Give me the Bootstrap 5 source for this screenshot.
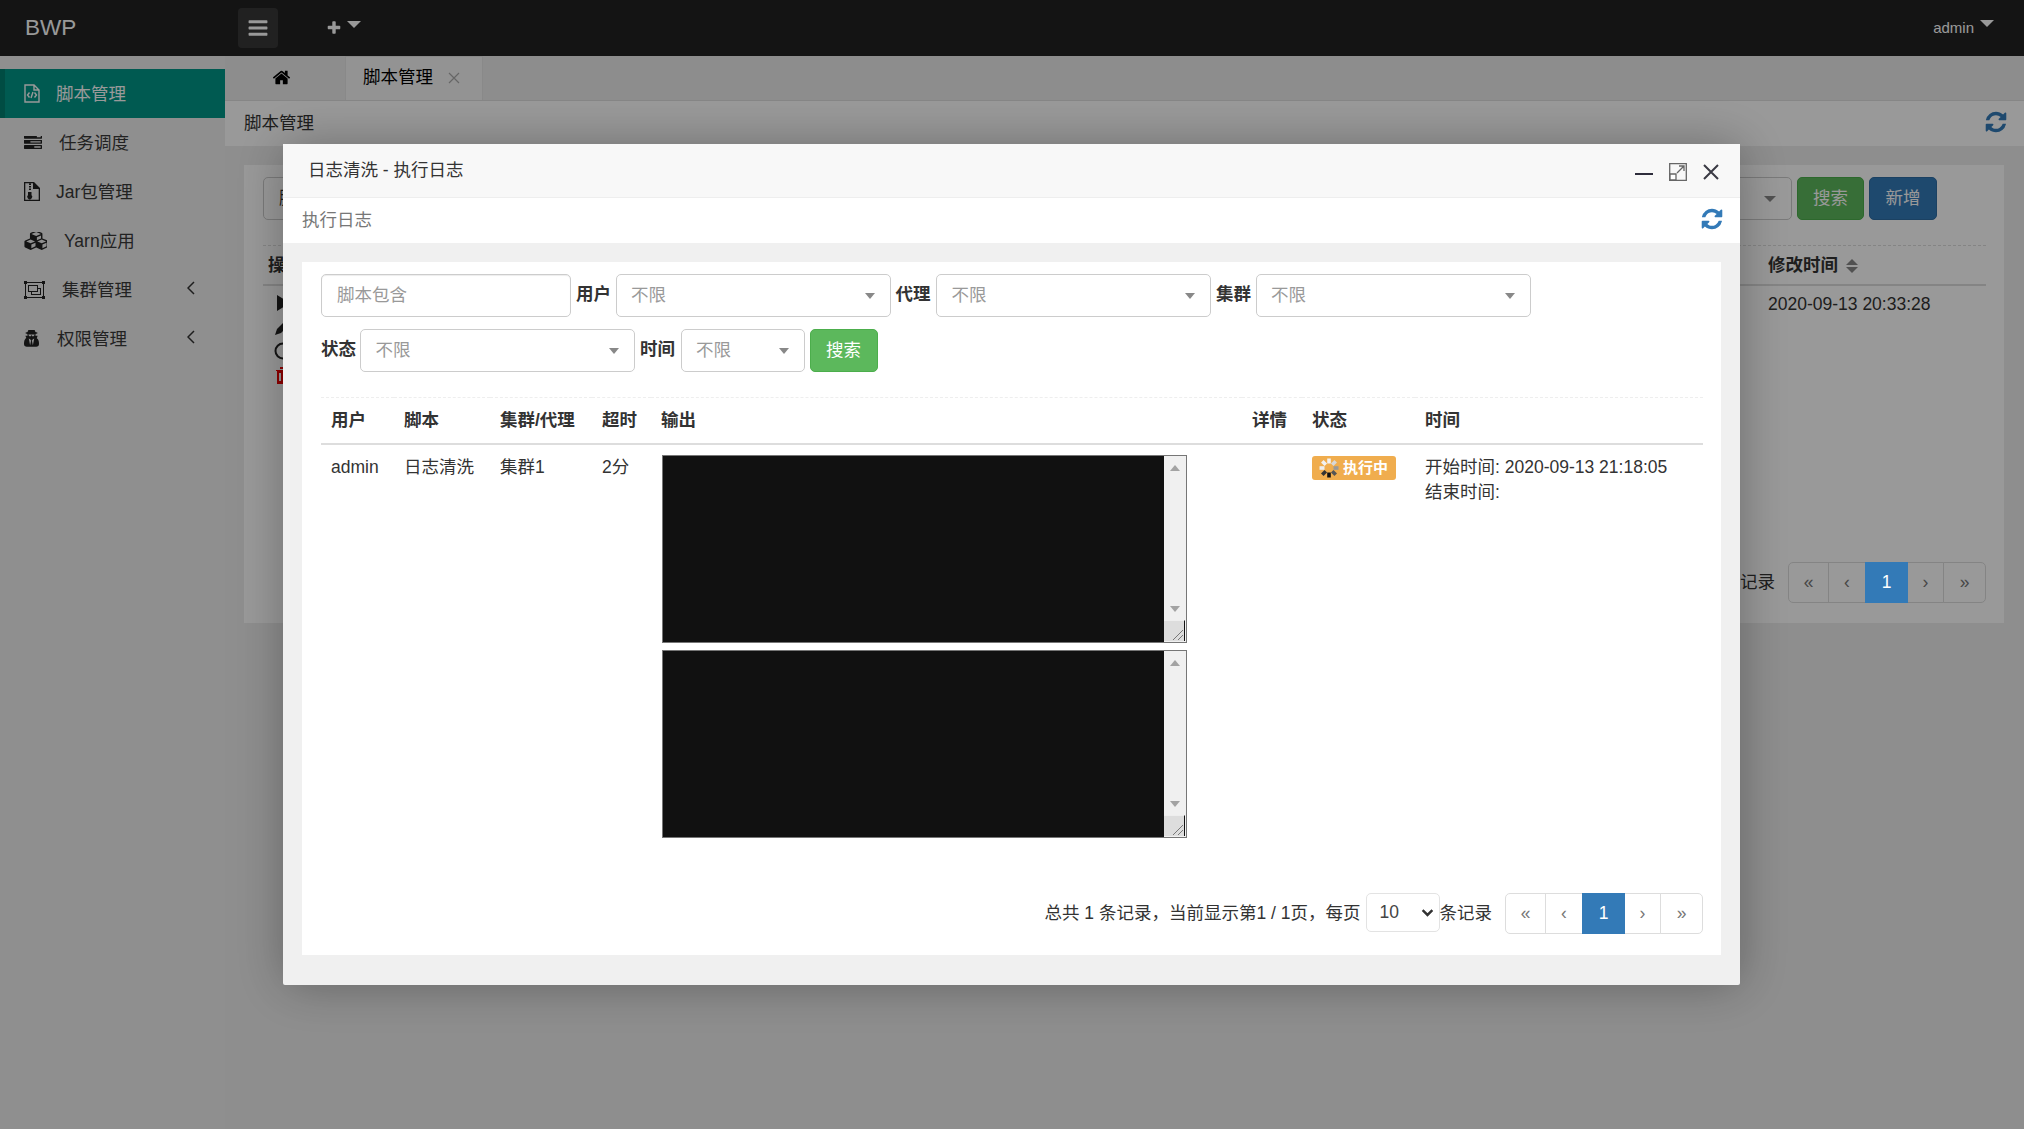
<!DOCTYPE html>
<html lang="zh-CN">
<head>
<meta charset="utf-8">
<title>BWP</title>
<link href="https://cdn.jsdelivr.net/npm/bootstrap@5.3.0/dist/css/bootstrap.min.css" rel="stylesheet">
<style>
html,body{height:100%;}
body{font-family:"Liberation Sans","Noto Sans CJK SC",sans-serif;font-size:17.5px;line-height:25px;color:#333;background:#efefef;overflow:hidden;}
.top-bar{height:56px;background:#222;color:#fff;}
.brand-txt{font-size:22.5px;margin-left:25px;width:213px;line-height:54px;}
.menu-toggle{width:40px;height:40px;background:#383838;border-radius:4px;}
.menu-toggle svg{width:22px;height:22px;fill:#fff;}
.plus-wrap{margin-left:48px;}
.plus-wrap svg{width:16px;height:16px;fill:#fff;}
.caret-down{display:inline-block;border-left:7.5px solid transparent;border-right:7.5px solid transparent;border-top:7px solid #fff;}
.plus-wrap .caret-down{margin-left:5px;margin-bottom:8px;}
.admin-wrap{font-size:15px;margin-right:30px;gap:6px;margin-bottom:2px;}
.admin-wrap .caret-down{margin-bottom:8px;}
.side-col{width:225px;padding-top:13px;background:#eee;flex:none;}
.side-item{height:49px;padding-left:24px;position:relative;color:#3a3a3a;}
.side-item span{padding-top:1px;}
.side-item svg{fill:#222;flex:none;}
.side-item.on{background:#009688;color:#fff;border-left:5px solid #007f70;padding-left:19px;}
.side-item.on svg{fill:none;stroke:#fff;}
.gap-a{margin-left:16px;}
.gap-b{margin-left:17px;}
.gap-c{margin-left:18px;}
.chev{position:absolute;left:187px;top:16px;width:8px;height:14px;}
.main-col{flex:1;min-width:0;background:#ededed;}
.tab-strip{height:45px;border-bottom:1px solid #e0e0e0;background:#ececec;}
.tab-home{width:120px;padding-right:8px;padding-bottom:2px;}
.tab-home svg{width:19px;height:19px;fill:#000;}
.tab-page{width:138px;background:#f6f6f6;border:1px solid #e4e4e4;border-bottom:0;padding-left:17px;padding-bottom:2px;color:#000;gap:15px;}
.crumb-bar{height:45px;background:#fff;padding-left:19px;color:#333;padding-right:16px;}
.crumb-bar svg{width:24px;height:24px;fill:#337ab7;margin-bottom:3px;}
.bg-card{margin:19px 20px 0 19px;height:458px;background:#fff;padding:12px 18px 20px 19px;}
.bg-input{width:260px;height:43px;border:1px solid #ccc;border-radius:5px;padding:8px 15px;}
.bg-select{width:240px;height:43px;border:1px solid #ccc;border-radius:5px;padding-right:15px;}
.caret-grey{display:inline-block;border-left:6px solid transparent;border-right:6px solid transparent;border-top:6px solid #888;}
.btn-green{background:#5cb85c;color:#fff;border:1px solid #4cae4c;border-radius:5px;}
.btn-blue{background:#337ab7;color:#fff;border:1px solid #2e6da4;border-radius:5px;}
.bg-btn{width:67px;height:43px;padding:0;font-size:17.5px;line-height:41px;}
.bg-btn.btn-blue{width:68px;}
.bg-btns{gap:5px;margin-right:49px;margin-left:5px;}
.bg-head{margin-top:25px;border-top:1px dashed #ddd;border-bottom:2px solid #ddd;height:41px;font-weight:700;line-height:38px;padding:0 0 0 5px;}
.bg-sort{display:inline-flex;flex-direction:column;gap:2px;margin-left:8px;vertical-align:6px;}
.sort-u{border-left:6px solid transparent;border-right:6px solid transparent;border-bottom:6px solid #888;}
.sort-d{border-left:6px solid transparent;border-right:6px solid transparent;border-top:6px solid #888;}
.time-cell{width:218px;}
.bg-date{padding-top:6px;}
.bg-ops{padding:8px 0 0 11px;gap:6px;}
.bg-ops svg{display:block;width:18px;height:18px;}
.bg-rec{margin-right:13px;}
.pager-list{--bs-pagination-font-size:17.5px;--bs-pagination-color:#777;--bs-pagination-border-color:#ddd;--bs-pagination-active-bg:#337ab7;--bs-pagination-active-border-color:#337ab7;--bs-pagination-border-radius:5px;margin:0;}
.pager-list .page-link{height:41px;line-height:39px;padding:0;text-align:center;}
.pg-a{width:41px;}.pg-b{width:38px;}.pg-c{width:43px;}.pg-d{width:37px;}.pg-e{width:43px;}
.dim-layer{position:fixed;inset:0;background:rgba(0,0,0,.4);}
.log-window{position:fixed;left:283px;top:144px;width:1457px;height:841px;background:#f0f0f0;box-shadow:1px 1px 50px rgba(0,0,0,.3);border-radius:2px;}
.log-title{height:54px;background:#f8f8f8;border-bottom:1px solid #eee;padding-left:25px;padding-right:21px;color:#333;}
.win-ctrl{gap:16px;padding-top:2px;}
.log-sub{height:45px;background:#fff;padding:0 19px;color:#777;}
.log-sub svg{width:24px;height:24px;fill:#337ab7;margin-right:-3px;margin-bottom:3px;}
.log-panel{margin:19px 19px 29px;background:#fff;height:693px;padding:12px 18px 21px 19px;}
.flt-row{gap:5px;margin-bottom:12px;}
.flt-input{width:250px;height:43px;font-size:17.5px;border:1px solid #ccc;border-radius:5px;padding:8px 15px;color:#555;box-shadow:inset 0 1px 1px rgba(0,0,0,.075);}
.flt-input::placeholder{color:#999;}
.flt-label{font-weight:700;width:34.5px;white-space:nowrap;line-height:41px;align-self:flex-start;}
.flt-select{height:43px;font-size:17.5px;line-height:25px;border:1px solid #ccc;border-radius:5px;padding:8px 34px 8px 14.5px;color:#999;
background-image:url("data:image/svg+xml,%3Csvg xmlns='http://www.w3.org/2000/svg' viewBox='0 0 12 7'%3E%3Cpath d='M0 0h12L6 7z' fill='%23888'/%3E%3C/svg%3E");background-size:10px 6px;background-position:right 15px center;}
.w-wide{width:275px;}
.w-short{width:124px;}
.lbl-sm{width:34px;}
.lbl-lg{width:35.5px;}
.flt-btn{width:68px;height:43px;padding:0;font-size:17.5px;line-height:41px;}
.log-table{width:1382px;table-layout:fixed;margin:25px 0 0;border-top:1px dashed #eee;--bs-table-color:#333;}
.log-table th,.log-table td{padding:10px;line-height:25px;border:0;}
.log-table thead th{border-bottom:2px solid #ddd;font-weight:700;}
.c1{width:73px}.c2{width:96px}.c3{width:102px}.c4{width:59px}.c5{width:591px}.c6{width:60px}.c7{width:113px}.c8{width:288px}
.out-box{width:525px;height:188px;border:1px solid #767676;background:#111;margin-bottom:7px;margin-left:1px;}
.out-box:last-child{margin-bottom:0;}
.out-fill{flex:1;}
.out-bar{width:22px;background:#f0f0f0;padding-top:9px;}
.tri-u{border-left:5px solid transparent;border-right:5px solid transparent;border-bottom:6px solid #a3a3a3;}
.tri-d{border-left:5px solid transparent;border-right:5px solid transparent;border-top:6px solid #a3a3a3;margin-top:auto;margin-bottom:8px;}
.grip{width:21px;height:21px;background:#ddd;display:block;margin-left:-1px;margin-bottom:1px;border-right:1px solid #111;border-top:1px solid #eee;}
.run-tag{display:inline-flex;align-items:center;width:84px;height:24px;background:#f0ad4e;color:#fff;font-size:15px;font-weight:700;border-radius:3px;padding-left:7px;gap:4px;line-height:24px;margin-top:1px;vertical-align:top;}
.run-tag svg{width:20px;height:20px;flex:none;}
.foot-row{margin-top:45px;gap:0;}
.size-select{width:74px;height:39px;font-size:17.5px;line-height:25px;padding:5px 20px 5px 13px;border:1px solid #e3e3e3;border-radius:5px;color:#444;margin:0 0 0 5px;
background-image:url("data:image/svg+xml,%3Csvg xmlns='http://www.w3.org/2000/svg' viewBox='0 0 16 16'%3E%3Cpath fill='none' stroke='%23333' stroke-width='3' d='M2 5l6 6 6-6'/%3E%3C/svg%3E");background-position:right 5px center;background-size:13px 13px;align-self:flex-start;}
.pager-gap{margin-left:13px;}
</style>
</head>
<body>
<div class="d-flex flex-column h-100">
  <header class="top-bar d-flex align-items-center flex-none">
    <div class="brand-txt">BWP</div>
    <div class="menu-toggle d-flex align-items-center justify-content-center">
      <svg viewBox="0 0 1792 1792"><path d="M1664 1344v128q0 26-19 45t-45 19h-1408q-26 0-45-19t-19-45v-128q0-26 19-45t45-19h1408q26 0 45 19t19 45zm0-512v128q0 26-19 45t-45 19h-1408q-26 0-45-19t-19-45v-128q0-26 19-45t45-19h1408q26 0 45 19t19 45zm0-512v128q0 26-19 45t-45 19h-1408q-26 0-45-19t-19-45v-128q0-26 19-45t45-19h1408q26 0 45 19t19 45z"/></svg>
    </div>
    <div class="plus-wrap d-flex align-items-center">
      <svg viewBox="0 0 1792 1792"><path d="M1600 736v192q0 40-28 68t-68 28h-416v416q0 40-28 68t-68 28h-192q-40 0-68-28t-28-68v-416h-416q-40 0-68-28t-28-68v-192q0-40 28-68t68-28h416v-416q0-40 28-68t68-28h192q40 0 68 28t28 68v416h416q40 0 68 28t28 68z"/></svg>
      <span class="caret-down"></span>
    </div>
    <div class="admin-wrap d-flex align-items-center ms-auto"><span>admin</span><span class="caret-down"></span></div>
  </header>
  <div class="d-flex flex-grow-1">
    <aside class="side-col">
      <div class="side-item on d-flex align-items-center">
        <svg width="16" height="19" viewBox="0 0 16 19" stroke-width="1.4"><path d="M1 1h9l5 5v12H1zM10 1v5h5"/><path d="M5.500 8.500L3.500 11l2 2.500M10.500 8.500l2 2.500-2 2.500M9 8l-2 6"/></svg>
        <span class="gap-a">脚本管理</span>
      </div>
      <div class="side-item d-flex align-items-center">
        <svg width="18" height="13" viewBox="0 256 1792 1280"><path d="M1024 1408h640v-128h-640v128zm-384-512h1024v-128h-1024v128zm640-512h384v-128h-384v128zm512 832v256q0 26-19 45t-45 19h-1664q-26 0-45-19t-19-45v-256q0-26 19-45t45-19h1664q26 0 45 19t19 45zm0-512v256q0 26-19 45t-45 19h-1664q-26 0-45-19t-19-45v-256q0-26 19-45t45-19h1664q26 0 45 19t19 45zm0-512v256q0 26-19 45t-45 19h-1664q-26 0-45-19t-19-45v-256q0-26 19-45t45-19h1664q26 0 45 19t19 45z"/></svg>
        <span class="gap-b">任务调度</span>
      </div>
      <div class="side-item d-flex align-items-center">
        <svg width="16" height="19" viewBox="0 0 16 19"><path fill-rule="evenodd" d="M0 0h10l6 6v13H0zM1.300 1.300v16.400h13.400V7H9V1.300zM5 1.500h2v1.500H5zM5 4h2v1.500H5zM5 6.500h2V8H5zM4 10h3.500v3a2.500 2.500 0 1 1-3.500 0z"/></svg>
        <span class="gap-a">Jar包管理</span>
      </div>
      <div class="side-item d-flex align-items-center">
        <svg width="23" height="18" viewBox="0 128 2048 1664"><path d="M640 1632l384-192v-314l-384 164v342zm-64-454l404-173-404-173-404 173zm1088 454l384-192v-314l-384 164v342zm-64-454l404-173-404-173-404 173zm-448-293l384-165v-266l-384 164v267zm-64-379l441-189-441-189-441 189zm1088 518v416q0 36-19 67t-52 47l-448 224q-25 14-57 14t-57-14l-448-224q-4-2-7-4-2 2-7 4l-448 224q-25 14-57 14t-57-14l-448-224q-33-16-52-47t-19-67v-416q0-38 21.500-70t56.500-48l434-186v-400q0-38 21.500-70t56.500-48l448-192q23-10 50-10t50 10l448 192q35 16 56.500 48t21.500 70v400l434 186q36 16 57 48t21 70z"/></svg>
        <span class="gap-b">Yarn应用</span>
      </div>
      <div class="side-item d-flex align-items-center">
        <svg width="21" height="18" viewBox="0 0 21 18"><path fill-rule="evenodd" d="M0 0h3v1h15V0h3v3h-1v12h1v3h-3v-1H3v1H0v-3h1V3H0zM3 2v1H2v12h1v1h15v-1h1V3h-1V2z"/><path fill-rule="evenodd" d="M4 4h10v3h3v7H7v-3H4zM5 5v5h8V5zM14 8v3H8v2h8V8z"/></svg>
        <span class="gap-b">集群管理</span>
        <svg class="chev" viewBox="0 0 8 14"><path d="M7 1L1 7l6 6" fill="none" stroke="#333" stroke-width="1.500"/></svg>
      </div>
      <div class="side-item d-flex align-items-center">
        <svg width="15" height="17" viewBox="0 128 1408 1536"><path d="M576 1536l96-448-96-128-128-64zm256 0l128-640-128 64-96 128zm160-1010q-2-4-4-6-10-8-96-8-70 0-167 19-7 2-21 2t-21-2q-97-19-167-19-86 0-96 8-2 2-4 6 2 18 4 27 2 3 7.500 6.500t7.500 10.500q2 4 7.500 20.500t7 20.500 7.500 17 8.500 17 9 14 12 13.500 14 9.500 17.500 8 20.500 4 24.500 2q36 0 59-12.500t32.500-30 14.500-34.500 11.500-29.500 17.500-12.500h12q11 0 17.500 12.500t11.500 29.500 14.500 34.500 32.500 30 59 12.500q13 0 24.500-2t20.500-4 17.500-8 14-9.500 12-13.500 9-14 8.500-17 7.500-17 7-20.500 7.500-20.500q2-7 7.500-10.500t7.500-6.500q2-9 4-27zm416 879q0 121-73 190t-194 69h-874q-121 0-194-69t-73-190q0-61 4.500-118t19-125.500 37.500-123.500 63.500-103.500 93.500-74.500l-90-220h214q-22-64-22-128 0-12 2-32-194-40-194-96 0-57 210-99 17-62 51.500-134t70.500-114q32-37 76-37 30 0 84 31t84 31 84-31 84-31q44 0 76 36 36 42 70.500 114t51.500 134q210 42 210 99 0 56-194 96 7 81-20 160h214l-82 225q63 33 107.500 96.500t65.500 143.500 29 151.500 8 148.500z"/></svg>
        <span class="gap-c">权限管理</span>
        <svg class="chev" viewBox="0 0 8 14"><path d="M7 1L1 7l6 6" fill="none" stroke="#333" stroke-width="1.500"/></svg>
      </div>
    </aside>
    <main class="main-col">
      <div class="tab-strip d-flex">
        <div class="tab-home d-flex align-items-center justify-content-center">
          <svg viewBox="0 0 1792 1792"><path d="M1472 992v480q0 26-19 45t-45 19h-384v-384h-256v384h-384q-26 0-45-19t-19-45v-480q0-1 .5-3t.5-3l575-474 575 474q1 2 1 6zm223-69l-62 74q-8 9-21 11h-3q-13 0-21-7l-692-577-692 577q-12 8-24 7-13-2-21-11l-62-74q-8-10-7-23.5t11-21.5l719-599q32-26 76-26t76 26l244 204v-195q0-14 9-23t23-9h192q14 0 23 9t9 23v408l219 182q10 8 11 21.5t-7 23.5z"/></svg>
        </div>
        <div class="tab-page d-flex align-items-center">
          <span>脚本管理</span>
          <svg width="12" height="12" viewBox="0 0 12 12"><path d="M1 1l10 10M11 1L1 11" stroke="#aaa" stroke-width="1.200"/></svg>
        </div>
      </div>
      <div class="crumb-bar d-flex align-items-center justify-content-between">
        <span>脚本管理</span>
        <svg viewBox="0 0 1792 1792"><path d="M1639 1056q0 5-1 7-64 268-268 434.5t-478 166.5q-146 0-282.5-55t-243.500-157l-129 129q-19 19-45 19t-45-19-19-45v-448q0-26 19-45t45-19h448q26 0 45 19t19 45-19 45l-137 137q71 66 161 102t187 36q134 0 250-65t186-179q11-17 53-117 8-23 30-23h192q13 0 22.500 9.500t9.500 22.500zm25-800v448q0 26-19 45t-45 19h-448q-26 0-45-19t-19-45 19-45l138-138q-148-137-349-137-134 0-250 65t-186 179q-11 17-53 117-8 23-30 23h-199q-13 0-22.500-9.500t-9.500-22.500v-7q65-268 270-434.500t480-166.500q146 0 284 55.500t245 156.500l130-129q19-19 45-19t45 19 19 45z"/></svg>
      </div>
      <section class="bg-card d-flex flex-column">
        <div class="d-flex align-items-center">
          <div class="bg-input">脚本名称</div>
          <div class="ms-auto bg-select d-flex align-items-center justify-content-end"><span class="caret-grey"></span></div>
          <div class="bg-btns d-flex">
            <button type="button" class="btn btn-green bg-btn">搜索</button>
            <button type="button" class="btn btn-blue bg-btn">新增</button>
          </div>
        </div>
        <div class="bg-head d-flex justify-content-between">
          <span>操作</span>
          <span class="time-cell">修改时间<span class="bg-sort"><span class="sort-u"></span><span class="sort-d"></span></span></span>
        </div>
        <div class="d-flex justify-content-between">
          <div class="bg-ops d-flex flex-column">
            <svg viewBox="0 0 18 18"><path d="M3 1l13 8-13 8z" fill="#222"/></svg>
            <svg viewBox="0 0 18 18"><path d="M1 17l2-6L12 2l4 4-9 9z" fill="#222"/></svg>
            <svg viewBox="0 0 18 18"><circle cx="9" cy="9" r="7.500" fill="none" stroke="#222" stroke-width="2"/></svg>
            <svg viewBox="0 0 18 18"><path d="M2 4h14v1h-1v13H3V5H2zM6 1h6v2H6zM5 7v8h2V7zM10 7v8h2V7z" fill="#ee0000"/></svg>
          </div>
          <div class="time-cell bg-date">2020-09-13 20:33:28</div>
        </div>
        <div class="mt-auto d-flex justify-content-end align-items-center">
          <span class="bg-rec">条记录</span>
          <ul class="pagination pager-list">
            <li class="page-item"><span class="page-link pg-a">«</span></li>
            <li class="page-item"><span class="page-link pg-b">‹</span></li>
            <li class="page-item active"><span class="page-link pg-c">1</span></li>
            <li class="page-item"><span class="page-link pg-d">›</span></li>
            <li class="page-item"><span class="page-link pg-e">»</span></li>
          </ul>
        </div>
      </section>
    </main>
  </div>
</div>

<div class="dim-layer"></div>

<div class="log-window d-flex flex-column">
  <div class="log-title d-flex align-items-center justify-content-between">
    <span>日志清洗 - 执行日志</span>
    <div class="win-ctrl d-flex align-items-center">
      <svg width="18" height="18" viewBox="0 0 18 18"><path d="M0 11h18" stroke="#2e2d3c" stroke-width="2"/></svg>
      <svg width="18" height="18" viewBox="0 0 18 18"><path d="M.7 .7h16.600v16.600H.7z" fill="none" stroke="#666" stroke-width="1.300"/><path d="M1 11h6v6H1z" fill="#fff" stroke="#666" stroke-width="1.300"/><path d="M8 10l7-7M10 3h5v5" fill="none" stroke="#666" stroke-width="1.300"/></svg>
      <svg width="16" height="16" viewBox="0 0 16 16"><path d="M1 1l14 14M15 1L1 15" stroke="#3a3a44" stroke-width="2"/></svg>
    </div>
  </div>
  <div class="log-sub d-flex align-items-center justify-content-between">
    <span>执行日志</span>
    <svg viewBox="0 0 1792 1792"><path d="M1639 1056q0 5-1 7-64 268-268 434.5t-478 166.5q-146 0-282.5-55t-243.500-157l-129 129q-19 19-45 19t-45-19-19-45v-448q0-26 19-45t45-19h448q26 0 45 19t19 45-19 45l-137 137q71 66 161 102t187 36q134 0 250-65t186-179q11-17 53-117 8-23 30-23h192q13 0 22.500 9.500t9.500 22.500zm25-800v448q0 26-19 45t-45 19h-448q-26 0-45-19t-19-45 19-45l138-138q-148-137-349-137-134 0-250 65t-186 179q-11 17-53 117-8 23-30 23h-199q-13 0-22.500-9.500t-9.500-22.500v-7q65-268 270-434.500t480-166.500q146 0 284 55.500t245 156.500l130-129q19-19 45-19t45 19 19 45z"/></svg>
  </div>
  <div class="log-panel">
    <div class="flt-row d-flex align-items-center">
      <input class="form-control flt-input" placeholder="脚本包含">
      <span class="flt-label">用户</span>
      <select class="form-select flt-select w-wide"><option>不限</option></select>
      <span class="flt-label lbl-lg">代理</span>
      <select class="form-select flt-select w-wide"><option>不限</option></select>
      <span class="flt-label">集群</span>
      <select class="form-select flt-select w-wide"><option>不限</option></select>
    </div>
    <div class="flt-row d-flex align-items-center">
      <span class="flt-label lbl-sm">状态</span>
      <select class="form-select flt-select w-wide"><option>不限</option></select>
      <span class="flt-label lbl-lg">时间</span>
      <select class="form-select flt-select w-short"><option>不限</option></select>
      <button type="button" class="btn btn-green flt-btn">搜索</button>
    </div>
    <table class="table log-table">
      <colgroup><col class="c1"><col class="c2"><col class="c3"><col class="c4"><col class="c5"><col class="c6"><col class="c7"><col class="c8"></colgroup>
      <thead>
        <tr><th>用户</th><th>脚本</th><th>集群/代理</th><th>超时</th><th>输出</th><th>详情</th><th>状态</th><th>时间</th></tr>
      </thead>
      <tbody>
        <tr>
          <td>admin</td>
          <td>日志清洗</td>
          <td>集群1</td>
          <td>2分</td>
          <td>
            <div class="out-box d-flex">
              <div class="out-fill"></div>
              <div class="out-bar d-flex flex-column align-items-center">
                <span class="tri-u"></span><span class="tri-d"></span>
                <svg class="grip" viewBox="0 0 20 20"><path d="M9 19L19 9M14 19l5-5" stroke="#777" stroke-width="1"/></svg>
              </div>
            </div>
            <div class="out-box d-flex">
              <div class="out-fill"></div>
              <div class="out-bar d-flex flex-column align-items-center">
                <span class="tri-u"></span><span class="tri-d"></span>
                <svg class="grip" viewBox="0 0 20 20"><path d="M9 19L19 9M14 19l5-5" stroke="#777" stroke-width="1"/></svg>
              </div>
            </div>
          </td>
          <td></td>
          <td>
            <span class="run-tag">
              <svg viewBox="0 0 20 20"><g stroke-width="3.600"><path d="M10 0.500v5" stroke="#f2f2f2"/><path d="M16.700 3.300l-3.500 3.500" stroke="#d8d8d8"/><path d="M19.500 10h-5" stroke="#999"/><path d="M16.700 16.700l-3.500-3.500" stroke="#555"/><path d="M10 19.500v-5" stroke="#111"/><path d="M3.300 16.700l3.500-3.500" stroke="#333"/><path d="M0.500 10h5" stroke="#eee"/><path d="M3.300 3.300l3.500 3.500" stroke="#f2f2f2"/></g></svg>
              <span>执行中</span>
            </span>
          </td>
          <td>开始时间: 2020-09-13 21:18:05<br>结束时间:</td>
        </tr>
      </tbody>
    </table>
    <div class="foot-row d-flex justify-content-end align-items-center">
      <span>总共 1 条记录，当前显示第1 / 1页，每页</span>
      <select class="form-select size-select"><option>10</option></select>
      <span>条记录</span>
      <ul class="pagination pager-list pager-gap">
        <li class="page-item"><span class="page-link pg-a">«</span></li>
        <li class="page-item"><span class="page-link pg-b">‹</span></li>
        <li class="page-item active"><span class="page-link pg-c">1</span></li>
        <li class="page-item"><span class="page-link pg-d">›</span></li>
        <li class="page-item"><span class="page-link pg-e">»</span></li>
      </ul>
    </div>
  </div>
</div>
<script src="https://cdn.jsdelivr.net/npm/bootstrap@5.3.0/dist/js/bootstrap.bundle.min.js"></script>
</body>
</html>
